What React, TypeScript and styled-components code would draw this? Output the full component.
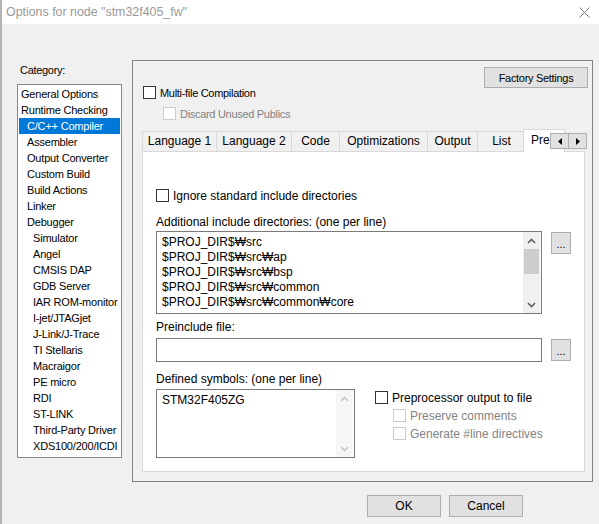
import React from "react";
import styled, { createGlobalStyle } from "styled-components";

const GlobalStyle = createGlobalStyle`
  html, body {
    margin: 0;
    padding: 0;
    background: #f0f0f0;
  }
  body {
    font-family: "Liberation Sans", "Noto Sans CJK KR", Arial, sans-serif;
    font-size: 12px;
    color: #000;
  }
  * {
    box-sizing: border-box;
  }
`;

const Window = styled.div`
  width: 599px;
  height: 524px;
  overflow: hidden;
  display: flex;
  flex-direction: column;
  background: #f0f0f0;
  border-left: 2px solid #b4b4b4;
`;

const TitleBar = styled.div`
  height: 24px;
  flex: none;
  background: #fff;
  display: flex;
  align-items: center;
  justify-content: space-between;
  padding: 0 9px 0 4px;
`;

const Title = styled.div`
  font-size: 12.4px;
  color: #9a9a9a;
  line-height: 16px;
`;

const Content = styled.div`
  display: flex;
  align-items: flex-start;
  gap: 10px;
  padding: 36px 0 0 15px;
`;

const CategoryColumn = styled.div`
  width: 105px;
  display: flex;
  flex-direction: column;
`;

const SmallText = styled.span`
  font-size: 11px;
  letter-spacing: -0.3px;
`;

const CategoryLabel = styled(SmallText)`
  display: block;
  height: 24px;
  padding: 3px 0 0 3px;
  line-height: 14px;
`;

const CategoryList = styled.div`
  height: 374px;
  background: #fff;
  border: 1px solid #828790;
  padding: 1px;
`;

const CategoryItem = styled.div<{ $level: number; $selected?: boolean }>`
  height: 16px;
  line-height: 16px;
  font-size: 11px;
  letter-spacing: -0.2px;
  white-space: nowrap;
  padding-left: ${(p) => 2 + p.$level * 6}px;
  background: ${(p) => (p.$selected ? "#0078d7" : "transparent")};
  color: ${(p) => (p.$selected ? "#fff" : "#000")};
`;

const Panel = styled.div`
  width: 461px;
  height: 422px;
  border: 1px solid #828282;
  padding: 6px 7px 0 9px;
  display: flex;
  flex-direction: column;
`;

const PanelHeader = styled.div`
  display: flex;
  justify-content: space-between;
  align-items: flex-start;
  margin-right: -3px;
`;

const OptionsColumn = styled.div`
  display: flex;
  flex-direction: column;
  gap: 8px;
  padding: 19px 0 0 1px;
`;

const CheckRow = styled.label<{ $indent?: number; $disabled?: boolean }>`
  display: flex;
  align-items: center;
  gap: 4px;
  height: 13px;
  margin-left: ${(p) => p.$indent || 0}px;
  color: ${(p) => (p.$disabled ? "#838383" : "#000")};
  white-space: nowrap;
`;

const Box = styled.span<{ $disabled?: boolean }>`
  width: 13px;
  height: 13px;
  flex: none;
  background: #fff;
  border: 1px solid ${(p) => (p.$disabled ? "#cccccc" : "#333333")};
`;

const PushButton = styled.div<{ $width: number; $height: number }>`
  width: ${(p) => p.$width}px;
  height: ${(p) => p.$height}px;
  flex: none;
  background: #e1e1e1;
  border: 1px solid #adadad;
  display: flex;
  align-items: center;
  justify-content: center;
`;

const TabStrip = styled.div`
  position: relative;
  z-index: 1;
  margin-top: 9px;
  height: 22px;
  display: flex;
  align-items: flex-end;
`;

const Tab = styled.div<{ $width: number }>`
  width: ${(p) => p.$width}px;
  height: 20px;
  flex: none;
  border: 1px solid #d9d9d9;
  border-bottom: none;
  margin-right: -1px;
  text-align: center;
  line-height: 19px;
  white-space: nowrap;
`;

const ActiveTab = styled.div`
  width: 42px;
  height: 23px;
  flex: none;
  margin: 0 0 -1px -2px;
  background: #fff;
  border: 1px solid #d9d9d9;
  border-bottom: none;
  padding: 1px 0 0 7px;
  line-height: 19px;
  white-space: nowrap;
  overflow: hidden;
`;

const TabScroller = styled.div`
  position: absolute;
  right: -2px;
  top: 4px;
  display: flex;
`;

const ScrollArrowButton = styled.div`
  width: 19px;
  height: 16px;
  background: #e1e1e1;
  border: 1px solid #adadad;
  display: flex;
  align-items: center;
  justify-content: center;
  & + & {
    margin-left: -1px;
  }
`;

const TabPage = styled.div`
  width: 443px;
  height: 321px;
  background: #fff;
  border: 1px solid #d9d9d9;
  padding: 37px 0 0 13px;
  display: flex;
  flex-direction: column;
`;

const FieldLabel = styled.div<{ $gap: number }>`
  margin-top: ${(p) => p.$gap}px;
  line-height: 14px;
  white-space: nowrap;
`;

const FieldRow = styled.div<{ $gap: number; $spacing?: number }>`
  display: flex;
  align-items: flex-start;
  gap: ${(p) => p.$spacing ?? 9}px;
  margin-top: ${(p) => p.$gap}px;
`;

const TextBox = styled.div<{ $width: number; $height: number }>`
  width: ${(p) => p.$width}px;
  height: ${(p) => p.$height}px;
  flex: none;
  background: #fff;
  border: 1px solid #7a7a7a;
  display: flex;
`;

const Lines = styled.div`
  flex: 1;
  padding: 3px 0 0 5px;
  line-height: 15px;
  white-space: pre;
  overflow: hidden;
`;

const Scrollbar = styled.div<{ $disabled?: boolean }>`
  width: 17px;
  flex: none;
  margin-right: 1px;
  display: flex;
  flex-direction: column;
  background: ${(p) => (p.$disabled ? "#f6f6f6" : "#f0f0f0")};
`;

const ArrowCell = styled.div`
  height: 17px;
  display: flex;
  align-items: center;
  justify-content: center;
`;

const Track = styled.div`
  flex: 1;
`;

const Thumb = styled.div`
  height: 25px;
  margin: 0 1px;
  background: #cdcdcd;
`;

const BrowseButton = styled(PushButton)`
  margin-top: 1px;
  align-items: flex-end;
  padding-bottom: 5px;
  font-size: 11px;
  line-height: 8px;
`;

const SideOptions = styled.div`
  display: flex;
  flex-direction: column;
  gap: 5px;
  margin-top: 2px;
`;

const Footer = styled.div`
  display: flex;
  justify-content: flex-end;
  gap: 8px;
  padding-right: 76px;
  margin-top: 13px;
`;

const Chevron: React.FC<{ up?: boolean; color: string }> = ({ up, color }) => (
  <svg width="9" height="6" viewBox="0 0 9 6">
    <polyline
      points={up ? "1,5 4.5,1.5 8,5" : "1,1 4.5,4.5 8,1"}
      fill="none"
      stroke={color}
      strokeWidth="1.6"
    />
  </svg>
);

const Triangle: React.FC<{ left?: boolean }> = ({ left }) => (
  <svg width="4" height="7" viewBox="0 0 4 7">
    <polygon points={left ? "4,0 0,3.5 4,7" : "0,0 4,3.5 0,7"} fill="#000" />
  </svg>
);

const CloseIcon = () => (
  <svg width="11" height="11" viewBox="0 0 11 11">
    <path d="M0.5 0.5 L10.5 10.5 M10.5 0.5 L0.5 10.5" stroke="#7a7a7a" strokeWidth="1" />
  </svg>
);

const categories: Array<[string, number]> = [
  ["General Options", 0],
  ["Runtime Checking", 0],
  ["C/C++ Compiler", 1],
  ["Assembler", 1],
  ["Output Converter", 1],
  ["Custom Build", 1],
  ["Build Actions", 1],
  ["Linker", 1],
  ["Debugger", 1],
  ["Simulator", 2],
  ["Angel", 2],
  ["CMSIS DAP", 2],
  ["GDB Server", 2],
  ["IAR ROM-monitor", 2],
  ["I-jet/JTAGjet", 2],
  ["J-Link/J-Trace", 2],
  ["TI Stellaris", 2],
  ["Macraigor", 2],
  ["PE micro", 2],
  ["RDI", 2],
  ["ST-LINK", 2],
  ["Third-Party Driver", 2],
  ["XDS100/200/ICDI", 2],
];

const tabs: Array<[string, number]> = [
  ["Language 1", 75],
  ["Language 2", 76],
  ["Code", 49],
  ["Optimizations", 89],
  ["Output", 51],
  ["List", 49],
];

const includeDirs = [
  "$PROJ_DIR$₩src",
  "$PROJ_DIR$₩src₩ap",
  "$PROJ_DIR$₩src₩bsp",
  "$PROJ_DIR$₩src₩common",
  "$PROJ_DIR$₩src₩common₩core",
];

const Check: React.FC<{ label: string; disabled?: boolean; indent?: number; small?: boolean }> = ({
  label,
  disabled,
  indent,
  small,
}) => (
  <CheckRow $disabled={disabled} $indent={indent}>
    <Box $disabled={disabled} />
    {small ? <SmallText>{label}</SmallText> : <span>{label}</span>}
  </CheckRow>
);

export default function App() {
  return (
    <>
      <GlobalStyle />
      <Window>
        <TitleBar>
          <Title>Options for node "stm32f405_fw"</Title>
          <CloseIcon />
        </TitleBar>
        <Content>
          <CategoryColumn>
            <CategoryLabel>Category:</CategoryLabel>
            <CategoryList>
              {categories.map(([name, level]) => (
                <CategoryItem key={name} $level={level} $selected={name === "C/C++ Compiler"}>
                  {name}
                </CategoryItem>
              ))}
            </CategoryList>
          </CategoryColumn>
          <Panel>
            <PanelHeader>
              <OptionsColumn>
                <Check label="Multi-file Compilation" small />
                <Check label="Discard Unused Publics" small disabled indent={20} />
              </OptionsColumn>
              <PushButton $width={104} $height={21}>
                <SmallText>Factory Settings</SmallText>
              </PushButton>
            </PanelHeader>
            <TabStrip>
              {tabs.map(([name, width]) => (
                <Tab key={name} $width={width}>
                  {name}
                </Tab>
              ))}
              <ActiveTab>Pre</ActiveTab>
              <TabScroller>
                <ScrollArrowButton>
                  <Triangle left />
                </ScrollArrowButton>
                <ScrollArrowButton>
                  <Triangle />
                </ScrollArrowButton>
              </TabScroller>
            </TabStrip>
            <TabPage>
              <Check label="Ignore standard include directories" />
              <FieldLabel $gap={13}>Additional include directories: (one per line)</FieldLabel>
              <FieldRow $gap={2}>
                <TextBox $width={386} $height={83}>
                  <Lines>{includeDirs.join("\n")}</Lines>
                  <Scrollbar>
                    <ArrowCell>
                      <Chevron up color="#606060" />
                    </ArrowCell>
                    <Track>
                      <Thumb />
                    </Track>
                    <ArrowCell>
                      <Chevron color="#606060" />
                    </ArrowCell>
                  </Scrollbar>
                </TextBox>
                <BrowseButton $width={20} $height={22}>...</BrowseButton>
              </FieldRow>
              <FieldLabel $gap={6}>Preinclude file:</FieldLabel>
              <FieldRow $gap={4}>
                <TextBox $width={386} $height={24} />
                <BrowseButton $width={20} $height={22}>...</BrowseButton>
              </FieldRow>
              <FieldLabel $gap={10}>Defined symbols: (one per line)</FieldLabel>
              <FieldRow $gap={3} $spacing={20}>
                <TextBox $width={199} $height={69}>
                  <Lines>STM32F405ZG</Lines>
                  <Scrollbar $disabled>
                    <ArrowCell>
                      <Chevron up color="#c4c4c4" />
                    </ArrowCell>
                    <Track />
                    <ArrowCell>
                      <Chevron color="#c4c4c4" />
                    </ArrowCell>
                  </Scrollbar>
                </TextBox>
                <SideOptions>
                  <Check label="Preprocessor output to file" />
                  <Check label="Preserve comments" disabled indent={18} />
                  <Check label="Generate #line directives" disabled indent={18} />
                </SideOptions>
              </FieldRow>
            </TabPage>
          </Panel>
        </Content>
        <Footer>
          <PushButton $width={74} $height={22}>OK</PushButton>
          <PushButton $width={74} $height={22}>Cancel</PushButton>
        </Footer>
      </Window>
    </>
  );
}
